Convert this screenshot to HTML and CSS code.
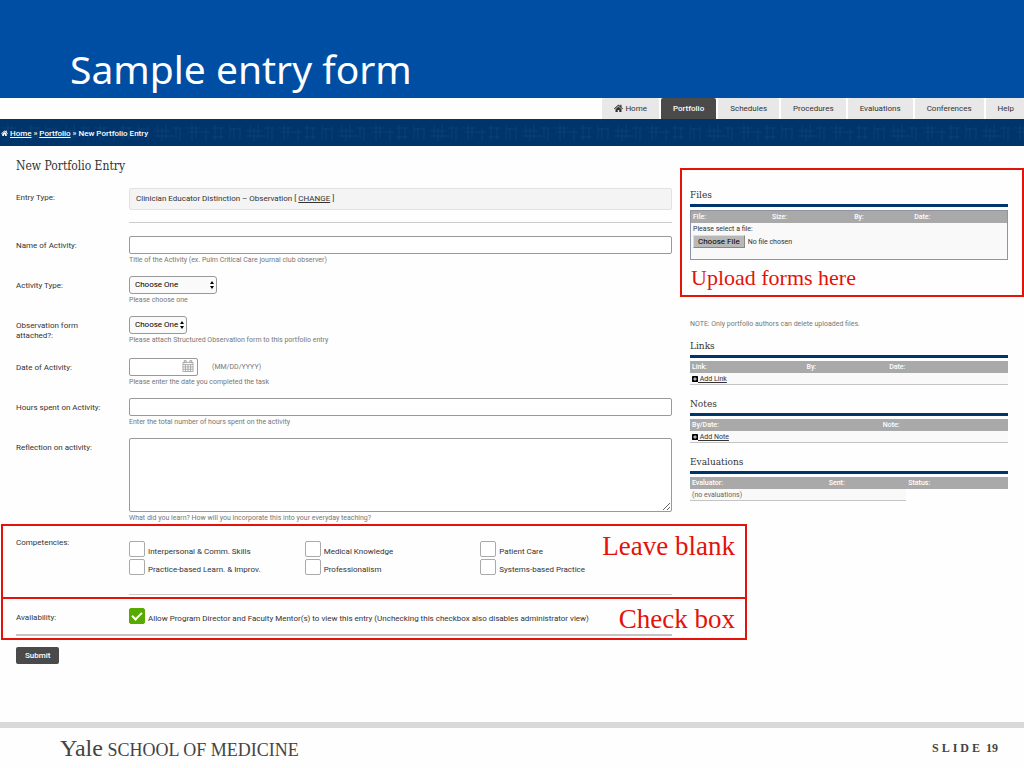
FILE: index.html
```html
<!DOCTYPE html>
<html lang="en">
<head>
    <meta charset="UTF-8">
    <meta name="viewport" content="width=device-width, initial-scale=1.0">
    <title>Sample entry form</title>
    <link rel="stylesheet" href="styles.css">
</head>
<body>
    <header class="slide-header">
        <h1>Sample entry form</h1>
    </header>

    <nav class="tabs">
        <a href="#"><svg class="icon-home" viewBox="0 0 18 16"><path d="M9 1 0 9l1.300 1.500L9 3.700l7.700 6.800L18 9l-3-2.700V1.500h-2.500v2.600zM9 5.200 3 10.500V16h4.500v-4h3v4H15v-5.500z"/></svg> Home</a>
        <a href="#" class="active">Portfolio</a>
        <a href="#">Schedules</a>
        <a href="#">Procedures</a>
        <a href="#">Evaluations</a>
        <a href="#">Conferences</a>
        <a href="#">Help</a>
    </nav>

    <div class="breadcrumb">
        <svg class="weave" aria-hidden="true">
            <defs>
                <pattern id="weave" width="92" height="27" patternUnits="userSpaceOnUse">
                    <path d="M2 9h14M4 13h22M8 5v16M12 7v12M22 8v14M28 9h12M28 18h12M31 6v16M37 8v12M46 6v14M50 9v12M46 10h10M56 7v14M62 12h16M66 6v12M70 9v13M74 5v15M62 17h20M84 7v13M88 10v12M80 9h10"/>
                </pattern>
            </defs>
            <rect width="100%" height="100%" fill="url(#weave)"/>
        </svg>
        <p><svg class="icon-home" viewBox="0 0 18 16"><path d="M9 1 0 9l1.300 1.500L9 3.700l7.700 6.800L18 9l-3-2.700V1.500h-2.500v2.600zM9 5.200 3 10.500V16h4.500v-4h3v4H15v-5.500z"/></svg> <a href="#">Home</a> » <a href="#">Portfolio</a> » New Portfolio Entry</p>
    </div>

    <main class="content">
        <form class="entry-form" onsubmit="return false">
            <h2>New Portfolio Entry</h2>

            <div class="row first">
                <span class="label">Entry Type:</span>
                <div class="field">
                    <div class="entry-type">Clinician Educator Distinction – Observation [ <a href="#">CHANGE</a> ]</div>
                    <hr>
                </div>
            </div>

            <div class="row">
                <label class="label" for="activityName">Name of Activity:</label>
                <div class="field">
                    <input type="text" id="activityName">
                    <p class="hint">Title of the Activity (ex. Pulm Critical Care journal club observer)</p>
                </div>
            </div>

            <div class="row">
                <label class="label" for="activityType">Activity Type:</label>
                <div class="field">
                    <span class="select wide">
                        <select id="activityType"><option>Choose One</option></select>
                        <svg viewBox="0 0 4 8"><path d="M2 0 4 3H0zM2 8 0 5h4z"/></svg>
                    </span>
                    <p class="hint">Please choose one</p>
                </div>
            </div>

            <div class="row">
                <label class="label" for="formAttached">Observation form<br>attached?:</label>
                <div class="field">
                    <span class="select">
                        <select id="formAttached"><option>Choose One</option></select>
                        <svg viewBox="0 0 4 8"><path d="M2 0 4 3H0zM2 8 0 5h4z"/></svg>
                    </span>
                    <p class="hint">Please attach Structured Observation form to this portfolio entry</p>
                </div>
            </div>

            <div class="row">
                <label class="label" for="activityDate">Date of Activity:</label>
                <div class="field">
                    <div class="date-line">
                        <span class="date-box">
                            <input type="text" id="activityDate">
                            <svg viewBox="0 0 13 13"><path d="M1 2.500h11v10H1zM1 5h11M1 7.500h11M1 10h11M3.700 5v7.500M6.500 5v7.500M9.300 5v7.500M2.500 3.500v-3h2v3M8.500 3.500v-3h2v3"/></svg>
                        </span>
                        <span class="hint">(MM/DD/YYYY)</span>
                    </div>
                    <p class="hint">Please enter the date you completed the task</p>
                </div>
            </div>

            <div class="row">
                <label class="label" for="hours">Hours spent on Activity:</label>
                <div class="field">
                    <input type="text" id="hours">
                    <p class="hint">Enter the total number of hours spent on the activity</p>
                </div>
            </div>

            <div class="row last">
                <label class="label" for="reflection">Reflection on activity:</label>
                <div class="field">
                    <textarea id="reflection"></textarea>
                    <p class="hint">What did you learn? How will you incorporate this into your everyday teaching?</p>
                </div>
            </div>

            <div class="row marked competencies">
                <span class="label">Competencies:</span>
                <div class="field">
                    <div class="checks">
                        <label><input type="checkbox">Interpersonal &amp; Comm. Skills</label>
                        <label><input type="checkbox">Medical Knowledge</label>
                        <label><input type="checkbox">Patient Care</label>
                        <label><input type="checkbox">Practice-based Learn. &amp; Improv.</label>
                        <label><input type="checkbox">Professionalism</label>
                        <label><input type="checkbox">Systems-based Practice</label>
                    </div>
                    <hr>
                </div>
                <div class="callout"><span>Leave blank</span></div>
            </div>

            <div class="row marked availability">
                <span class="label">Availability:</span>
                <div class="field checks-single">
                    <label><input type="checkbox" checked>Allow Program Director and Faculty Mentor(s) to view this entry (Unchecking this checkbox also disables administrator view)</label>
                </div>
                <div class="callout"><span>Check box</span></div>
            </div>

            <button type="submit" class="submit">Submit</button>
        </form>

        <aside class="sidebar">
            <section class="files">
                <h3>Files</h3>
                <table>
                    <colgroup><col style="width:25%"><col style="width:26%"><col style="width:19%"><col style="width:30%"></colgroup>
                    <thead>
                        <tr><th>File:</th><th>Size:</th><th>By:</th><th>Date:</th></tr>
                    </thead>
                    <tbody>
                        <tr>
                            <td colspan="4">
                                <label for="upload">Please select a file:</label>
                                <input type="file" id="upload">
                            </td>
                        </tr>
                    </tbody>
                </table>
                <div class="callout"><span>Upload forms here</span></div>
            </section>

            <p class="note">NOTE: Only portfolio authors can delete uploaded files.</p>

            <section>
                <h3>Links</h3>
                <table>
                    <colgroup><col style="width:36%"><col style="width:26%"><col style="width:38%"></colgroup>
                    <thead>
                        <tr><th>Link:</th><th>By:</th><th>Date:</th></tr>
                    </thead>
                    <tbody>
                        <tr><td colspan="3"><a href="#"><svg viewBox="0 0 14 14"><path fill-rule="evenodd" d="M2 0h10a2 2 0 0 1 2 2v10a2 2 0 0 1-2 2H2a2 2 0 0 1-2-2V2a2 2 0 0 1 2-2zM6 3v3H3v2h3v3h2V8h3V6H8V3z"/></svg> Add Link</a></td></tr>
                    </tbody>
                </table>
            </section>

            <section>
                <h3>Notes</h3>
                <table>
                    <colgroup><col style="width:60%"><col style="width:40%"></colgroup>
                    <thead>
                        <tr><th>By/Date:</th><th>Note:</th></tr>
                    </thead>
                    <tbody>
                        <tr><td colspan="2"><a href="#"><svg viewBox="0 0 14 14"><path fill-rule="evenodd" d="M2 0h10a2 2 0 0 1 2 2v10a2 2 0 0 1-2 2H2a2 2 0 0 1-2-2V2a2 2 0 0 1 2-2zM6 3v3H3v2h3v3h2V8h3V6H8V3z"/></svg> Add Note</a></td></tr>
                    </tbody>
                </table>
            </section>

            <section>
                <h3>Evaluations</h3>
                <table>
                    <colgroup><col style="width:43%"><col style="width:25%"><col style="width:32%"></colgroup>
                    <thead>
                        <tr><th>Evaluator:</th><th>Sent:</th><th>Status:</th></tr>
                    </thead>
                    <tbody>
                        <tr><td colspan="2" class="empty">(no evaluations)</td></tr>
                    </tbody>
                </table>
            </section>
        </aside>
    </main>

    <footer class="slide-footer">
        <p class="brand"><span>Yale</span> SCHOOL OF MEDICINE</p>
        <p class="slide-number"><span>SLIDE</span> 19</p>
    </footer>
</body>
</html>
```

FILE: styles.css
```css
:root {
    --blue: #004ea3;
    --navy: #00356b;
    --text: #333333;
    --text-light: #777777;
    --border: #999999;
    --dark: #4a4a4a;
    --red: #e3120b;
    --green: #56aa00;
}

* {
    box-sizing: border-box;
    margin: 0;
    padding: 0;
}

body {
    display: flex;
    flex-direction: column;
    min-height: 100vh;
    background-color: #fefefe;
    color: var(--text);
    font-family: Roboto, "Liberation Sans", sans-serif;
    font-size: 8px;
    line-height: 10px;
}

a {
    color: inherit;
}

input,
select,
textarea,
button {
    font: inherit;
    color: inherit;
}

.slide-header {
    height: 98px;
    padding: 42px 70px 0;
    background-color: var(--blue);
    color: white;
}

.slide-header h1 {
    font-family: "Noto Sans", "Open Sans", sans-serif;
    font-size: 39px;
    font-weight: 400;
    line-height: 54px;
}

.tabs {
    display: flex;
    justify-content: flex-end;
    gap: 2px;
}

.tabs a {
    padding: 0 12px;
    border-radius: 2px 2px 0 0;
    background-color: #e8e8e8;
    line-height: 22px;
    height: 21px;
    text-decoration: none;
}

.tabs a:last-child {
    padding-right: 10px;
}

.tabs .active {
    background-color: var(--dark);
    color: white;
    font-weight: 500;
}

.icon-home {
    width: 9px;
    height: 8px;
    fill: currentColor;
    vertical-align: -1px;
}

.breadcrumb {
    position: relative;
    height: 27px;
    background-color: var(--navy);
    color: white;
    font-weight: 500;
}

.breadcrumb p {
    position: relative;
    padding-left: 1px;
    line-height: 29px;
}

.breadcrumb .icon-home {
    width: 7px;
    height: 6px;
    vertical-align: 0;
}

.weave {
    position: absolute;
    inset: 0;
    width: 100%;
    height: 100%;
}

.weave path {
    fill: none;
    stroke: #1d4a7c;
    stroke-width: 1;
    opacity: 0.4;
}

.content {
    display: grid;
    grid-template-columns: 656fr 318fr;
    gap: 18px;
    padding: 0 16px;
}

/* Entry form */

.entry-form h2 {
    padding: 12px 0 14px;
    font-family: "DejaVu Serif Condensed", "DejaVu Serif", serif;
    font-size: 12px;
    font-weight: 400;
    line-height: 16px;
}

.row {
    display: flex;
    min-height: 30px;
    margin-bottom: 10px;
}

.row.first {
    margin-bottom: 13px;
}

.row.last {
    margin-bottom: 0;
}

.label {
    flex: 0 0 113px;
    padding: 5px 0 7px;
}

.field {
    flex: 1;
    min-width: 0;
}

.field > input,
.field > textarea {
    display: block;
    width: 100%;
}

.entry-type {
    height: 22px;
    padding: 0 6px;
    border: 1px solid #e2e2e2;
    border-radius: 2px;
    background-color: #f4f4f4;
    line-height: 20px;
}

.entry-form hr {
    margin-top: 12px;
    border: none;
    border-top: 1px solid #cccccc;
}

input[type="text"],
textarea {
    height: 18px;
    padding: 0 4px;
    border: 1px solid var(--border);
    border-radius: 2px;
    background-color: white;
}

textarea {
    height: 74px;
    resize: vertical;
}

.hint {
    color: var(--text-light);
    font-size: 7px;
    line-height: 12px;
}

.select {
    display: flex;
    position: relative;
    width: 58px;
}

.select.wide {
    width: 88px;
}

.select select {
    width: 100%;
    height: 18px;
    padding: 0 5px;
    border: 1px solid var(--border);
    border-radius: 3px;
    background-color: #fafafa;
    color: black;
    appearance: none;
}

.select svg {
    position: absolute;
    top: 5px;
    right: 3px;
    width: 4px;
    height: 8px;
    pointer-events: none;
}

.date-line {
    display: flex;
    align-items: center;
    gap: 14px;
}

.date-box {
    display: flex;
    position: relative;
    width: 69px;
}

.date-box input {
    width: 100%;
}

.date-box svg {
    position: absolute;
    top: 2px;
    right: 4px;
    width: 12px;
    height: 12px;
    fill: none;
    stroke: #888888;
    stroke-width: 0.7;
}

.checks {
    display: grid;
    grid-template-columns: repeat(3, 1fr);
    row-gap: 2px;
    padding: 3px 16px 0 0;
}

.checks label,
.checks-single label {
    display: flex;
    align-items: flex-end;
    gap: 3px;
}

input[type="checkbox"] {
    width: 16px;
    height: 16px;
    border: 1px solid #aaaaaa;
    border-radius: 2px;
    background-color: white;
    appearance: none;
}

input[type="checkbox"]:checked {
    display: grid;
    place-items: center;
    border-color: var(--green);
    background-color: var(--green);
}

input[type="checkbox"]:checked::before {
    content: "";
    width: 8px;
    height: 4px;
    margin-bottom: 3px;
    border-left: 2px solid white;
    border-bottom: 2px solid white;
    transform: rotate(-45deg);
}

.marked {
    position: relative;
    margin-bottom: 0;
}

.competencies {
    height: 74px;
    padding-top: 14px;
}

.competencies .label {
    padding-top: 0;
}

.competencies hr {
    margin-top: 19px;
}

.availability {
    height: 38px;
    padding-top: 10px;
    border-bottom: 2px solid #c4c4c4;
}

/* Red frames laid over the page */

.callout {
    position: absolute;
    border: 2px solid var(--red);
    color: var(--red);
    font-family: Georgia, "Liberation Serif", serif;
    font-size: 27px;
    line-height: 40px;
    text-align: right;
    pointer-events: none;
}

.marked .callout {
    top: 0;
    left: -15px;
    right: -75px;
    height: 75px;
    padding-right: 10px;
}

.availability .callout {
    top: -1px;
    height: 43px;
}

.submit {
    margin-top: 11px;
    padding: 0 9px;
    border: none;
    border-radius: 2px;
    background-color: var(--dark);
    color: white;
    font-weight: 500;
    line-height: 17px;
    cursor: pointer;
}

/* Sidebar */

.sidebar {
    padding-top: 41px;
    font-size: 7px;
}

.sidebar section {
    margin-bottom: 11px;
}

.sidebar h3 {
    margin-bottom: 3px;
    padding-bottom: 1px;
    border-bottom: 3px solid var(--navy);
    font-family: "DejaVu Serif Condensed", "DejaVu Serif", serif;
    font-size: 10px;
    font-weight: 400;
    line-height: 16px;
}

.sidebar table {
    width: 100%;
    border-collapse: separate;
    border-spacing: 0;
    table-layout: fixed;
}

.sidebar th,
.sidebar td {
    height: 12px;
    padding: 0 2px;
    text-align: left;
}

.sidebar th {
    background-color: #a9a9a9;
    color: white;
    font-weight: 500;
}

.sidebar td {
    border-bottom: 1px solid #c4c4c4;
    background-color: #f9f9f9;
}

.sidebar td svg {
    width: 6px;
    height: 6px;
    vertical-align: -1px;
}

.sidebar td.empty {
    color: #666666;
}

.files {
    position: relative;
}

.files table {
    border: 1px solid #8f93a8;
}

.files td {
    height: 36px;
    border-bottom: none;
    vertical-align: top;
}

.files label,
.files input {
    display: block;
}

.files label {
    line-height: 12px;
}

.files input::file-selector-button {
    height: 13px;
    margin-right: 3px;
    padding: 0 4px;
    border: 1px solid #888888;
    border-top-color: #dddddd;
    border-left-color: #dddddd;
    background-color: #b8b8b8;
    font: inherit;
    font-size: 8px;
}

.files .callout {
    top: -19px;
    left: -10px;
    right: -16px;
    height: 129px;
    padding: 88px 9px 0;
    font-size: 22px;
    line-height: 40px;
    text-align: left;
}

.note {
    padding: 47px 0 8px;
    color: var(--text-light);
    line-height: 12px;
}

/* Footer */

.slide-footer {
    display: flex;
    justify-content: space-between;
    height: 46px;
    margin-top: auto;
    padding: 0 26px 0 60px;
    border-top: 6px solid #d9d9d9;
    color: #444444;
    font-family: "Liberation Serif", serif;
    line-height: 40px;
}

.brand {
    font-size: 18px;
}

.brand span {
    font-size: 24px;
}

.slide-number {
    font-size: 12px;
    font-weight: 700;
}

.slide-number span {
    letter-spacing: 3px;
}
```
